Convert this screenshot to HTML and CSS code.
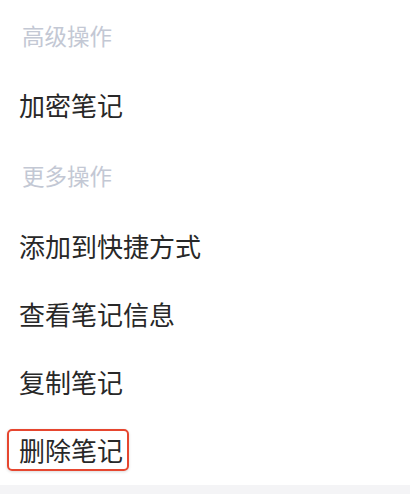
FILE: index.html
```html
<!DOCTYPE html>
<html lang="zh-CN">
<head>
<meta charset="utf-8">
<link rel="stylesheet" href="styles.css">
</head>
<body>
<div class="sheet">
  <div class="group-title first">高级操作</div>
  <div class="item tall">加密笔记</div>
  <div class="group-title second">更多操作</div>
  <div class="item">添加到快捷方式</div>
  <div class="item">查看笔记信息</div>
  <div class="item">复制笔记</div>
  <div class="item"><span class="marked">删除笔记</span></div>
</div>
<div class="footer"></div>
</body>
</html>
```
FILE: styles.css
```css
html, body {
  margin: 0;
  padding: 0;
  background: #ffffff;
}
body {
  width: 410px;
  height: 494px;
  overflow: hidden;
  font-family: "Noto Sans CJK SC", "Noto Sans", sans-serif;
}
.sheet {
  padding-top: 1px;
  height: 484px;
}
.group-title {
  display: flex;
  align-items: center;
  padding-left: 22px;
  font-size: 22.5px;
  color: #c3c8d4;
  height: 68px;
}
.group-title.second {
  height: 72px;
}
.item {
  display: flex;
  align-items: center;
  padding-left: 19px;
  font-size: 26px;
  color: #282828;
  height: 68px;
}
.item.tall {
  height: 70px;
}
.marked {
  display: inline-flex;
  align-items: center;
  height: 36px;
  margin-left: -12px;
  margin-top: 2px;
  padding: 0 4px 2px 10px;
  border: 2px solid #e6462f;
  border-radius: 5px;
  box-shadow: 0 1px 3px rgba(0,0,0,0.15);
}
.footer {
  height: 9px;
  background: #f4f4f6;
}
```
